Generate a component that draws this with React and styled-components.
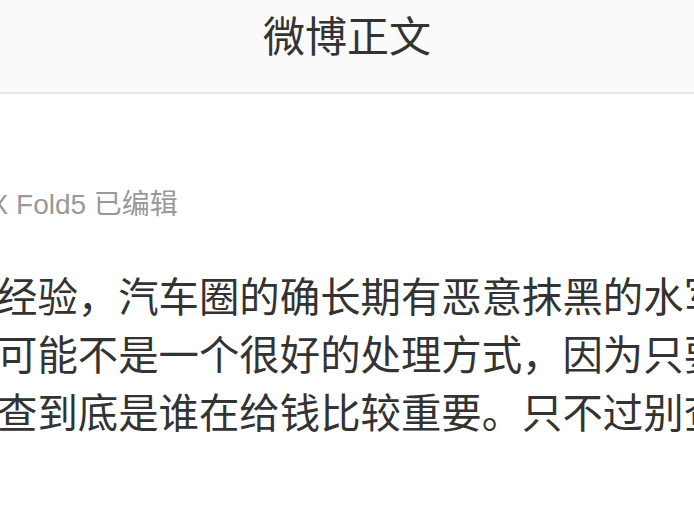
import styled, { createGlobalStyle } from 'styled-components';

const GlobalStyle = createGlobalStyle`
   html, body {
      margin: 0;
      padding: 0;
      background: #ffffff;
      overflow: hidden;
   }
   body {
      font-family: "Liberation Sans", "Noto Sans CJK SC", sans-serif;
   }
`;

const Page = styled.div`
   width: 694px;
   min-height: 532px;
   overflow: hidden;
   background: #ffffff;
`;

const Header = styled.header`
   height: 94px;
   padding-top: 13px;
   box-sizing: border-box;
   background: #fafafa;
   border-bottom: 2px solid #e6e6e6;
   text-align: center;
`;

const Title = styled.h1`
   margin: 0;
   font-family: "Noto Sans CJK SC", sans-serif;
   font-size: 42px;
   line-height: 42px;
   font-weight: 400;
   color: #333333;
`;

const Post = styled.article`
   padding-top: 97px;
   display: flex;
   flex-direction: column;
   gap: 47px;
`;

const Meta = styled.div`
   margin-left: ${(p) => p.$shift}px;
   font-size: 28px;
   line-height: 28px;
   color: #999999;
   white-space: nowrap;
`;

const Text = styled.p`
   margin: 0 0 0 ${(p) => p.$shift}px;
   font-family: "Noto Sans CJK SC", sans-serif;
   font-size: 40.4px;
   line-height: 58px;
   color: #333333;
   white-space: nowrap;
`;

const lines = [
   '经验，汽车圈的确长期有恶意抹黑的水军，',
   '可能不是一个很好的处理方式，因为只要',
   '查到底是谁在给钱比较重要。只不过别查',
];

export default function App() {
   return (
      <>
         <GlobalStyle />
         <Page>
            <Header>
               <Title>微博正文</Title>
            </Header>
            <Post>
               <Meta $shift={-68}>vivo X Fold5 已编辑</Meta>
               <Text $shift={-3}>
                  {lines.map((line, i) => (
                     <span key={i}>
                        {line}
                        {i < lines.length - 1 && <br />}
                     </span>
                  ))}
               </Text>
            </Post>
         </Page>
      </>
   );
}
